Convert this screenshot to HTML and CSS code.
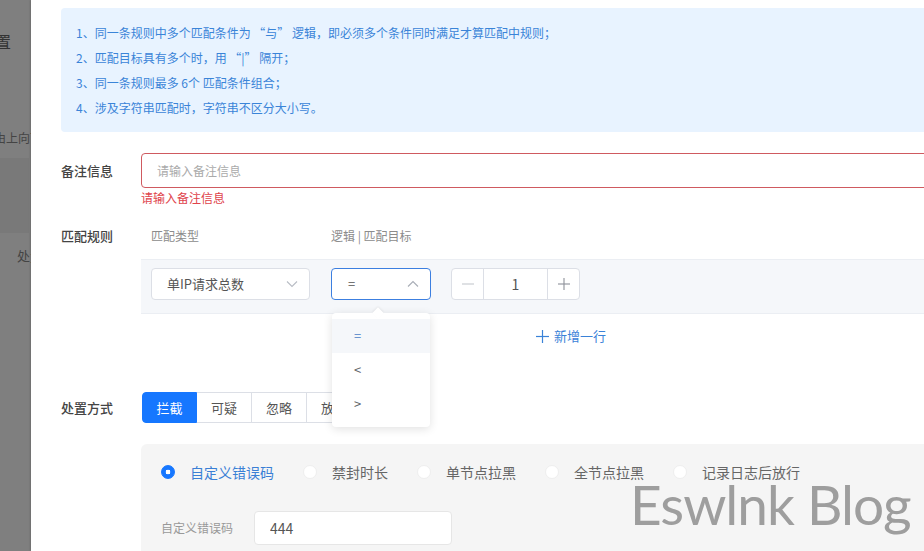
FILE: index.html
```html
<!DOCTYPE html>
<html lang="zh-CN">
  <head>
    <meta charset="utf-8">
    <link rel="stylesheet" href="styles.css">
  </head>
  <body>
    <div class="mask">
      <div class="mask-title">配置</div>
      <div class="mask-hint">由上向下</div>
      <div class="mask-block"></div>
      <div class="mask-label">处置方式</div>
    </div>
    <div class="drawer">
      <div class="content">
        <div class="tips">
          <p>1、同一条规则中多个匹配条件为 “与” 逻辑，即必须多个条件同时满足才算匹配中规则；</p>
          <p>2、匹配目标具有多个时，用 “|” 隔开；</p>
          <p>3、同一条规则最多 6个 匹配条件组合；</p>
          <p>4、涉及字符串匹配时，字符串不区分大小写。</p>
        </div>

        <div class="form-item remark">
          <label class="form-label">备注信息</label>
          <div class="form-body">
            <input type="text" class="input is-error" placeholder="请输入备注信息">
            <div class="error-text">请输入备注信息</div>
          </div>
        </div>

        <div class="form-item rules">
          <label class="form-label">匹配规则</label>
          <div class="form-body">
            <div class="rule-head">
              <span class="col-type">匹配类型</span>
              <span class="col-op">逻辑 | 匹配目标</span>
            </div>
            <div class="rule-row">
              <div class="select col-type">
                <span>单IP请求总数</span>
                <svg class="chevron" width="12" height="8" viewBox="0 0 12 8"><polyline points="1,1.5 6,6.5 11,1.5" fill="none" stroke="#b8bcc4" stroke-width="1.1"/></svg>
              </div>
              <div class="select col-op is-focus">
                <span>=</span>
                <svg class="chevron" width="12" height="8" viewBox="0 0 12 8"><polyline points="1,6.5 6,1.5 11,6.5" fill="none" stroke="#a8adb6" stroke-width="1.1"/></svg>
                <div class="dropdown">
                  <div class="dropdown-arrow"></div>
                  <div class="option is-hover">=</div>
                  <div class="option">&lt;</div>
                  <div class="option">&gt;</div>
                </div>
              </div>
              <div class="number">
                <span class="num-btn">
                  <svg width="12" height="12" viewBox="0 0 12 12"><line x1="0" y1="6" x2="12" y2="6" stroke="#c5c8ce" stroke-width="1.1"/></svg>
                </span>
                <span class="num-value">1</span>
                <span class="num-btn">
                  <svg width="12" height="12" viewBox="0 0 12 12"><line x1="0" y1="6" x2="12" y2="6" stroke="#8d9199" stroke-width="1.1"/><line x1="6" y1="0" x2="6" y2="12" stroke="#8d9199" stroke-width="1.1"/></svg>
                </span>
              </div>
            </div>
            <div class="add-row">
              <svg width="13" height="13" viewBox="0 0 13 13"><line x1="0" y1="6.5" x2="13" y2="6.5" stroke="#3a82d8" stroke-width="1.2"/><line x1="6.5" y1="0" x2="6.5" y2="13" stroke="#3a82d8" stroke-width="1.2"/></svg>
              <span>新增一行</span>
            </div>
          </div>
        </div>

        <div class="form-item action">
          <label class="form-label">处置方式</label>
          <div class="form-body">
            <div class="btn-group">
              <button class="btn is-active">拦截</button>
              <button class="btn">可疑</button>
              <button class="btn">忽略</button>
              <button class="btn">放行</button>
            </div>
            <div class="panel">
              <div class="radio-group">
                <span class="radio is-checked"><i></i>自定义错误码</span>
                <span class="radio"><i></i>禁封时长</span>
                <span class="radio"><i></i>单节点拉黑</span>
                <span class="radio"><i></i>全节点拉黑</span>
                <span class="radio"><i></i>记录日志后放行</span>
              </div>
              <div class="code-row">
                <span class="code-label">自定义错误码</span>
                <input type="text" class="input code-input" value="444">
              </div>
            </div>
          </div>
        </div>
      </div>
      <div class="watermark">Eswlnk Blog</div>
    </div>
  </body>
</html>
```

FILE: styles.css
```css
html, body { margin: 0; padding: 0; height: 551px; overflow: hidden; }
body {
  display: flex;
  font: 13px/1.5 "Noto Sans CJK SC", "Noto Sans", sans-serif;
  color: #555;
}
p { margin: 0; }
input, button { font: inherit; outline: none; }

/* dimmed page behind the drawer */
.mask {
  width: 31px; flex-shrink: 0; overflow: hidden;
  background: #7f7f7f; color: #333;
}
.mask div { white-space: nowrap; }
.mask-title { font-size: 16px; line-height: 24px; margin: 29px 0 0 -21px; }
.mask-hint { font-size: 12px; line-height: 20px; margin: 75px 0 0 -6px; color: #444; }
.mask-block { height: 75px; width: 29px; margin-top: 10px; background: #797979; }
.mask-label { font-size: 13px; line-height: 20px; margin: 13px 0 0 17px; color: #444; }

.drawer {
  flex: 1; position: relative; overflow: hidden;
  background: #fff; padding: 8px 0 0 30px;
  box-shadow: -1px 0 2px rgba(0, 0, 0, .15);
}
.content { width: 1000px; }

.tips {
  background: #e8f3ff; border-radius: 4px;
  padding: 12px 15px; color: #3a84d8;
  font-size: 12px; line-height: 25px;
}

.form-item { display: flex; }
.form-label { width: 80px; flex-shrink: 0; color: #444; font-weight: 500; }
.form-body { flex: 1; }

.remark { margin-top: 21px; }
.remark .form-label { line-height: 35px; }
.input {
  box-sizing: border-box; width: 100%; height: 35px;
  border: 1px solid #dcdfe6; border-radius: 4px;
  padding: 0 15px; color: #555; font-size: 12px; background: #fff;
}
.input::placeholder { color: #aaa; }
.input.is-error { border-color: #cf5a60; }
.error-text { margin-top: 2px; font-size: 12px; line-height: 16px; color: #e0434b; }

.rules { margin-top: 20px; }
.rules .form-label { line-height: 20px; }
.rule-head { display: flex; padding-left: 10px; font-size: 12px; line-height: 20px; color: #8c8c8c; }
.col-type { width: 159px; margin-right: 21px; }
.col-op { width: 100px; margin-right: 20px; }
.rule-row {
  display: flex; margin-top: 13px;
  background: #f5f7fa; border-top: 1px solid #ebeef3; border-bottom: 1px solid #ebeef3;
  padding: 8px 10px 13px;
}
.select {
  box-sizing: border-box; height: 32px; position: relative;
  display: flex; align-items: center; justify-content: space-between;
  padding: 0 11px 0 15px;
  background: #fff; border: 1px solid #dcdfe6; border-radius: 4px;
}
.select.is-focus { border-color: #3c7fe0; padding-left: 16px; }
.dropdown {
  position: absolute; top: 44px; left: 0; width: 98px;
  background: #fff; border-radius: 4px; padding: 6px 0;
  box-shadow: 0 2px 10px rgba(0, 0, 0, .12); z-index: 2;
}
.dropdown-arrow {
  position: absolute; top: -4px; left: 42px; width: 8px; height: 8px;
  background: #fff; transform: rotate(45deg);
  box-shadow: -1px -1px 2px rgba(0, 0, 0, .06);
}
.option { position: relative; line-height: 34px; padding-left: 22px; color: #606266; }
.option.is-hover { background: #f5f7fa; color: #4a7fc8; }

.number {
  display: flex; box-sizing: border-box; height: 32px; width: 129px;
  background: #fff; border: 1px solid #dcdfe6; border-radius: 4px;
}
.num-btn { width: 31px; display: flex; align-items: center; justify-content: center; }
.num-value {
  flex: 1; text-align: center; line-height: 30px; font-size: 14px; color: #555;
  border-left: 1px solid #dcdfe6; border-right: 1px solid #dcdfe6;
}

.add-row {
  display: flex; align-items: center; gap: 5px;
  margin-top: 12px; padding-left: 395px;
  line-height: 20px; color: #3a82d8;
}

.action { margin-top: 46px; }
.action .form-label { line-height: 31px; }
.btn-group { display: flex; margin-left: 1px; }
.btn {
  width: 55px; height: 31px; padding: 0; cursor: pointer;
  background: #fff; color: #555; font-size: 13px;
  border: 1px solid #dcdfe6; border-left: none;
}
.btn:first-child { border-left: 1px solid #dcdfe6; border-radius: 4px 0 0 4px; }
.btn.is-active { background: #1677ff; border-color: #1677ff; color: #fff; }

.panel {
  margin-top: 21px; height: 200px;
  background: #f5f5f5; border-radius: 6px;
  padding: 18px 20px 0;
}
.radio-group { display: flex; line-height: 20px; font-size: 14px; color: #666; }
.radio { display: flex; align-items: center; margin-right: 29px; }
.radio i {
  box-sizing: border-box; width: 14px; height: 14px; margin-right: 15px;
  border-radius: 50%; background: #fff; border: 1px solid #eeeeee;
}
.radio.is-checked { color: #3a7fd5; }
.radio.is-checked i { border-color: #1677ff; background: radial-gradient(circle, #fff 0 2.2px, #1677ff 2.6px); }

.code-row { display: flex; align-items: center; margin-top: 29px; }
.code-label { width: 93px; font-size: 12px; color: #999; }
.code-input { width: 198px; height: 34px; font-size: 14px; border-color: #e6e6e6; }

.watermark {
  position: absolute; left: 599px; top: 484px;
  font: 55px/40px Lato, "Open Sans", sans-serif; color: #9e9e9e;
  letter-spacing: -1px; white-space: nowrap;
}
```
